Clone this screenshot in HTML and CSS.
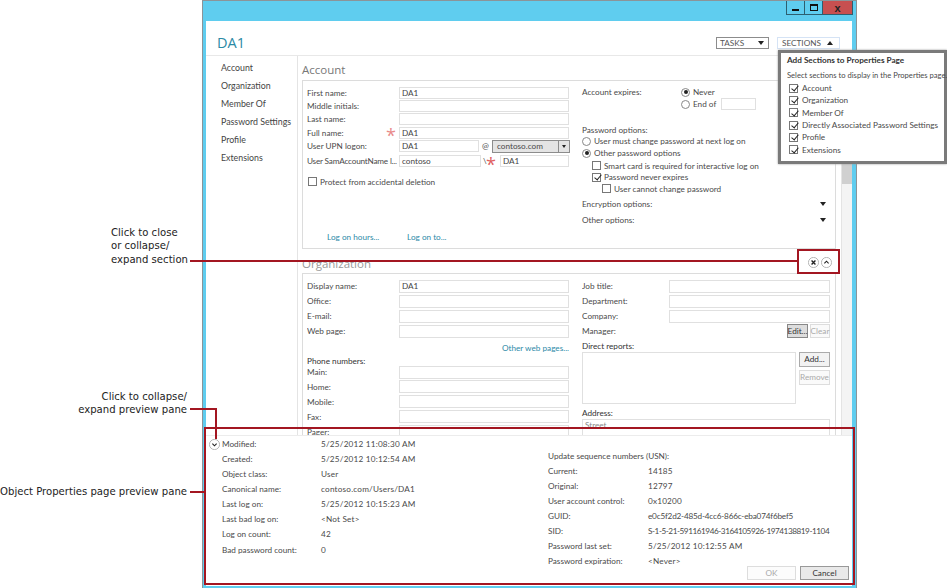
FILE: index.html
```html
<!DOCTYPE html>
<html lang="en">
<head>
  <meta charset="UTF-8" />
  <title>DA1 Properties</title>
  <link rel="stylesheet" href="styles.css">
</head>
<body>
  <div class="window">
    <div class="titlebar">
      <div class="winbtns">
        <span class="winbtn"><i class="min"></i></span>
        <span class="winbtn"><i class="max"></i></span>
        <span class="winbtn close">x</span>
      </div>
    </div>
    <div class="inner">
      <header class="top">
        <h1>DA1</h1>
        <div class="topbtn">TASKS <span class="tri-down"></span></div>
        <div class="topbtn sections">SECTIONS <span class="tri-up"></span></div>
      </header>
      <div class="content">
        <nav class="nav">
          <a>Account</a>
          <a>Organization</a>
          <a>Member Of</a>
          <a>Password Settings</a>
          <a>Profile</a>
          <a>Extensions</a>
        </nav>
        <main class="main">
          <h2>Account</h2>
          <section class="box account">
            <div class="col">
              <div class="row"><label>First name:</label><div class="input">DA1</div></div>
              <div class="row"><label>Middle initials:</label><div class="input"></div></div>
              <div class="row"><label>Last name:</label><div class="input"></div></div>
              <div class="row"><label>Full name:</label><span class="star">*</span><div class="input">DA1</div></div>
              <div class="row"><label>User UPN logon:</label><div class="input upn">DA1</div><span class="at">@</span><div class="combo">contoso.com<span class="combo-arrow"><b class="tri-down small"></b></span></div></div>
              <div class="row sam"><label>User SamAccountName l...</label><div class="input upn2">contoso</div><span class="slash">\</span><span class="star">*</span><div class="input grow">DA1</div></div>
              <div class="check protect"><span class="cb"></span>Protect from accidental deletion</div>
              <div class="links"><a>Log on hours...</a><a>Log on to...</a></div>
            </div>
            <div class="col right">
              <div class="expires">
                <label>Account expires:</label>
                <div class="expires-opts">
                  <div class="check"><span class="rb on"></span>Never</div>
                  <div class="check"><span class="rb"></span>End of<span class="input date"></span></div>
                </div>
              </div>
              <div class="pw-title">Password options:</div>
              <div class="check line"><span class="rb"></span>User must change password at next log on</div>
              <div class="check line"><span class="rb on"></span>Other password options</div>
              <div class="check line ind1 first-ind"><span class="cb"></span>Smart card is required for interactive log on</div>
              <div class="check line ind1"><span class="cb on"></span>Password never expires</div>
              <div class="check line ind2"><span class="cb"></span>User cannot change password</div>
              <div class="expander first">Encryption options:<span class="tri-down"></span></div>
              <div class="expander">Other options:<span class="tri-down"></span></div>
            </div>
          </section>
          <h2 class="org-title">Organization</h2>
          <section class="box org">
            <div class="col">
              <div class="row tall"><label>Display name:</label><div class="input">DA1</div></div>
              <div class="row tall"><label>Office:</label><div class="input"></div></div>
              <div class="row tall"><label>E-mail:</label><div class="input"></div></div>
              <div class="row tall"><label>Web page:</label><div class="input"></div></div>
              <a class="other-pages">Other web pages...</a>
              <div class="phones">Phone numbers:</div>
              <div class="row tall"><label>Main:</label><div class="input"></div></div>
              <div class="row tall"><label>Home:</label><div class="input"></div></div>
              <div class="row tall"><label>Mobile:</label><div class="input"></div></div>
              <div class="row tall"><label>Fax:</label><div class="input"></div></div>
              <div class="row tall"><label>Pager:</label><div class="input"></div></div>
            </div>
            <div class="col right">
              <div class="row tall r"><label>Job title:</label><div class="input"></div></div>
              <div class="row tall r"><label>Department:</label><div class="input"></div></div>
              <div class="row tall r"><label>Company:</label><div class="input"></div></div>
              <div class="row tall manager"><label>Manager:</label><span class="btn edit">Edit...</span><span class="btn off">Clear</span></div>
              <div class="direct-label">Direct reports:</div>
              <div class="direct">
                <div class="listbox"></div>
                <div class="direct-btns"><span class="btn">Add...</span><span class="btn off">Remove</span></div>
              </div>
              <div class="addr-label">Address:</div>
              <div class="input street">Street</div>
            </div>
          </section>
        </main>
        <div class="scrollbar"><span class="thumb"></span></div>
      </div>
      <footer class="preview">
        <div class="pcol">
          <div class="prow"><span class="pkey first"><svg class="round" viewBox="0 0 13 13"><circle cx="6.5" cy="6.5" r="6" fill="#fff" stroke="#aaa"/><path d="M4 5.5l2.5 2.5 2.5-2.5" fill="none" stroke="#222" stroke-width="1.3"/></svg>Modified:</span><span class="pval">5/25/2012 11:08:30 AM</span></div>
          <div class="prow"><span class="pkey">Created:</span><span class="pval">5/25/2012 10:12:54 AM</span></div>
          <div class="prow"><span class="pkey">Object class:</span><span class="pval">User</span></div>
          <div class="prow"><span class="pkey">Canonical name:</span><span class="pval">contoso.com/Users/DA1</span></div>
          <div class="prow"><span class="pkey">Last log on:</span><span class="pval">5/25/2012 10:15:23 AM</span></div>
          <div class="prow"><span class="pkey">Last bad log on:</span><span class="pval">&lt;Not Set&gt;</span></div>
          <div class="prow"><span class="pkey">Log on count:</span><span class="pval">42</span></div>
          <div class="prow"><span class="pkey">Bad password count:</span><span class="pval">0</span></div>
        </div>
        <div class="pcol second">
          <div class="usn">Update sequence numbers (USN):</div>
          <div class="prow"><span class="pkey">Current:</span><span class="pval">14185</span></div>
          <div class="prow"><span class="pkey">Original:</span><span class="pval">12797</span></div>
          <div class="prow"><span class="pkey">User account control:</span><span class="pval">0x10200</span></div>
          <div class="prow"><span class="pkey">GUID:</span><span class="guid">e0c5f2d2-485d-4cc6-866c-eba074f6bef5</span></div>
          <div class="prow"><span class="pkey">SID:</span><span class="sid">S-1-5-21-591161946-3164105926-1974138819-1104</span></div>
          <div class="prow"><span class="pkey">Password last set:</span><span class="pval">5/25/2012 10:12:55 AM</span></div>
          <div class="prow"><span class="pkey">Password expiration:</span><span class="pval">&lt;Never&gt;</span></div>
        </div>
        <div class="actions"><span class="btn wide off">OK</span><span class="btn wide">Cancel</span></div>
      </footer>
    </div>

    <!-- flyout over the window -->
    <div class="flyout">
      <h3>Add Sections to Properties Page</h3>
      <p>Select sections to display in the Properties page.</p>
      <div class="check"><span class="cb on"></span>Account</div>
      <div class="check"><span class="cb on"></span>Organization</div>
      <div class="check"><span class="cb on"></span>Member Of</div>
      <div class="check"><span class="cb on"></span>Directly Associated Password Settings</div>
      <div class="check"><span class="cb on"></span>Profile</div>
      <div class="check"><span class="cb on"></span>Extensions</div>
    </div>
    <div class="section-btns">
      <svg class="round" viewBox="0 0 13 13"><circle cx="6.5" cy="6.5" r="6" fill="#fff" stroke="#aaa"/><path d="M4.2 4.2l4.6 4.6M8.8 4.2l-4.6 4.6" stroke="#222" stroke-width="1.6"/></svg>
      <svg class="round" viewBox="0 0 13 13"><circle cx="6.5" cy="6.5" r="6" fill="#fff" stroke="#aaa"/><path d="M4 7.5l2.5-2.5 2.5 2.5" fill="none" stroke="#222" stroke-width="1.3"/></svg>
    </div>
  </div>

  <!-- callouts drawn over the screenshot -->
  <div class="note note1">Click to close<br>or collapse/<br>expand section</div>
  <div class="note note2">Click to collapse/<br>expand preview pane</div>
  <div class="note note3">Object Properties page preview pane</div>
  <div class="red line1"></div>
  <div class="red-box box1"></div>
  <div class="red line2"></div>
  <div class="red line2v"></div>
  <div class="red-box box2"></div>
  <div class="red line3"></div>
</body>
</html>
```

FILE: styles.css
```css
* {
  box-sizing: border-box;
}

body {
  margin: 0;
  width: 947px;
  height: 588px;
  position: relative;
  overflow: hidden;
  background: #fff;
  font-family: Lato, sans-serif;
  font-size: 8.2px;
  color: #4a4a4a;
}

.window {
  position: absolute;
  left: 202px;
  top: 0;
  width: 655px;
  height: 590px;
  background: #5fcdef;
  border: 1px solid #8b9499;
  display: flex;
  flex-direction: column;
}
.titlebar {
  height: 20px;
  flex: none;
  display: flex;
  justify-content: flex-end;
  padding-right: 3px;
}
.winbtns {
  display: flex;
  height: 14px;
  border: 1px solid #2d5f70;
  border-top: none;
}
.winbtn {
  width: 18px;
  border-right: 1px solid #2d5f70;
  display: flex;
  align-items: center;
  justify-content: center;
}
.winbtn .min {
  width: 7px;
  height: 2px;
  margin-top: 4px;
  background: #111;
}
.winbtn .max {
  width: 8px;
  height: 7px;
  border: 1px solid #111;
  border-top-width: 2px;
}
.winbtn.close {
  width: 29px;
  border-right: none;
  background: #c75050;
  color: #222;
  font: bold 11px "Liberation Sans", sans-serif;
}

.inner {
  flex: 1;
  min-height: 0;
  margin: 0 4px 3px 3px;
  background: #fff;
  display: flex;
  flex-direction: column;
}
.top {
  height: 35px;
  flex: none;
  display: flex;
  align-items: flex-start;
  padding: 16px 12px 0 11px;
  border-bottom: 1px solid #e8e8e8;
}
.top h1 {
  margin: -4px auto 0 0;
  font-family: "Open Sans", sans-serif;
  font-size: 14.5px;
  font-weight: 400;
  color: #2b8aa5;
}
.topbtn {
  width: 53px;
  height: 12px;
  margin-left: 8px;
  padding: 0 4px 0 3px;
  border: 1px solid #8c8c8c;
  display: flex;
  align-items: center;
  justify-content: space-between;
  font-size: 8.2px;
  color: #555;
  line-height: 10px;
}
.topbtn.sections {
  width: 63px;
  padding: 0 6px 0 4px;
  border-color: #d5e3f5;
}
.tri-down, .tri-up {
  display: inline-block;
  width: 0;
  height: 0;
  border-left: 3.5px solid transparent;
  border-right: 3.5px solid transparent;
}
.tri-down {
  border-top: 4px solid #222;
}
.tri-up {
  border-bottom: 4px solid #222;
}
.tri-down.small {
  border-left-width: 2.5px;
  border-right-width: 2.5px;
  border-top-width: 3px;
}

.content {
  flex: 1;
  min-height: 0;
  display: flex;
  overflow: hidden;
}
.nav {
  width: 92px;
  flex: none;
  padding: 6px 0 0 15px;
  border-right: 1px solid #e4e4e4;
}
.nav a {
  display: block;
  height: 18px;
  line-height: 12px;
  font-size: 8.8px;
  white-space: nowrap;
  color: #444;
}
.main {
  width: 544px;
  flex: none;
  padding: 0 5px 0 4px;
  border-right: 1px solid #e4e4e4;
}
.main h2 {
  margin: 0;
  height: 24px;
  padding-top: 6px;
  font-family: "Open Sans", sans-serif;
  font-size: 11.5px;
  line-height: 16px;
  font-weight: 400;
  color: #777;
}
.main h2.org-title {
  height: 24px;
  padding-top: 7px;
  color: #999;
}
.box {
  border: 1px solid #dcdcdc;
  display: flex;
  padding: 5px 5px 0 4px;
}
.account {
  height: 169px;
}
.org {
  height: 170px;
  padding-top: 5px;
  border-bottom: none;
}
.col {
  width: 262px;
  flex: none;
}
.col.right {
  width: 248px;
  margin-left: 13px;
}

.row {
  height: 13.4px;
  display: flex;
  align-items: center;
}
.row.tall {
  height: 14.9px;
}
.row label {
  width: 92px;
  flex: none;
  white-space: nowrap;
  overflow: hidden;
}
.row .star + .input {
  margin-left: 0;
}
.row.r label {
  width: 87px;
}
.input {
  flex: 1;
  height: 12px;
  min-width: 0;
  padding-left: 2px;
  border: 1px solid #e0e0e0;
  line-height: 10px;
  color: #444;
}
.row.tall .input {
  height: 13px;
  line-height: 11px;
}
.star {
  width: 0;
  color: #e88a8a;
  font-family: "Open Sans", sans-serif;
  font-size: 18px;
  line-height: 13px;
  position: relative;
  left: -13px;
  top: 3px;
}
.input.upn {
  flex: none;
  width: 80px;
}
.at {
  width: 13px;
  text-align: center;
}
.combo {
  flex: 1;
  height: 13px;
  padding-left: 4px;
  margin-right: -1px;
  border: 1px solid #8c8c8c;
  background: #e4e4e4;
  line-height: 11px;
  display: flex;
  justify-content: space-between;
}
.combo-arrow {
  width: 11px;
  border-left: 1px solid #8c8c8c;
  display: flex;
  align-items: center;
  justify-content: center;
}
.row.sam {
  height: 15px;
  margin-top: 1px;
}
.row.sam label {
  width: 91px;
  letter-spacing: -0.2px;
}
.input.upn2 {
  flex: none;
  width: 82px;
  margin-left: 1px;
}
.slash {
  width: 3px;
  margin-left: 2px;
}
.row.sam .star {
  position: static;
  width: 14px;
  margin-top: 6px;
  color: #e06060;
}
.row.sam .input.grow {
  flex: 1;
  margin-left: 0;
}

.check {
  display: flex;
  align-items: center;
  white-space: nowrap;
}
.cb {
  width: 9px;
  height: 9px;
  flex: none;
  margin-right: 3px;
  border: 1px solid #777;
  background: #fff;
  position: relative;
}
.cb.on::after {
  content: "";
  position: absolute;
  left: 2.5px;
  top: -0.5px;
  width: 3px;
  height: 6px;
  border: solid #222;
  border-width: 0 1.4px 1.4px 0;
  transform: rotate(40deg);
}
.rb {
  width: 9px;
  height: 9px;
  flex: none;
  margin-right: 3px;
  border: 1px solid #888;
  border-radius: 50%;
  background: #fff;
  position: relative;
}
.rb.on::after {
  content: "";
  position: absolute;
  left: 1.5px;
  top: 1.5px;
  width: 4px;
  height: 4px;
  border-radius: 50%;
  background: #222;
}
.protect {
  margin: 8px 0 0 1px;
}
.links {
  display: flex;
  margin: 45px 0 0 20px;
}
.links a, .other-pages {
  color: #2d8aa8;
}
.links a {
  width: 80px;
}

.expires {
  display: flex;
  height: 33px;
}
.expires label {
  width: 99px;
  padding-top: 1px;
}
.expires-opts .check {
  height: 12px;
}
.input.date {
  flex: none;
  display: block;
  width: 35px;
  height: 12px;
  margin: 0 0 0 5px;
}
.pw-title {
  margin-top: 5px;
  height: 11px;
  line-height: 12px;
}
.check.line {
  height: 12px;
}
.check.line.ind1, .check.line.ind2 {
  height: 11.5px;
}
.ind1 {
  margin-left: 10px;
}
.ind2 {
  margin-left: 20px;
}
.first-ind {
  margin-top: 1px;
}
.expander {
  height: 16px;
  line-height: 14px;
  display: flex;
  align-items: center;
  justify-content: space-between;
  padding-right: 4px;
}
.expander.first {
  margin-top: 1px;
}

.other-pages {
  display: block;
  height: 14px;
  line-height: 15px;
  margin-top: 2px;
  text-align: right;
}
.phones {
  height: 10px;
  line-height: 12px;
  margin-top: 0;
  color: #333;
}
.manager {
  justify-content: flex-start;
}
.manager label {
  flex: 1;
}
.btn {
  display: inline-flex;
  align-items: center;
  justify-content: center;
  height: 14px;
  border: 1px solid #aaa;
  background: #f2f2f2;
  color: #333;
}
.btn.off {
  border-color: #ddd;
  color: #aaa;
  background: #fafafa;
}
.btn.edit {
  width: 21px;
  margin-right: 2px;
  background: #ddd;
  border-color: #888;
}
.manager .off {
  width: 20px;
}
.direct-label {
  height: 9px;
  line-height: 13px;
  margin-top: 1px;
  color: #333;
}
.direct {
  display: flex;
  gap: 3px;
  margin-top: 3px;
}
.listbox {
  width: 214px;
  height: 52px;
  border: 1px solid #e0e0e0;
}
.direct-btns {
  flex: 1;
  display: flex;
  flex-direction: column;
  gap: 3px;
}
.direct-btns .btn {
  height: 15px;
}
.addr-label {
  height: 12px;
  line-height: 14px;
  margin-top: 2px;
  color: #333;
}
.input.street {
  height: 20px;
  color: #888;
  margin-top: 1px;
}

.scrollbar {
  width: 10px;
  background: #f4f4f4;
  padding-top: 104px;
}
.thumb {
  display: block;
  height: 24px;
  background: #d0d0d0;
}

.preview {
  height: 151px;
  flex: none;
  display: flex;
  position: relative;
  padding: 0 0 0 16px;
  border-top: 1px solid #ececec;
  background: #fff;
}
.pcol {
  width: 326px;
}
.pcol.second {
  width: 300px;
  padding-top: 14px;
}
.pcol.second .prow {
  height: 15px;
}
.usn {
  height: 13px;
  line-height: 13px;
}
.prow {
  display: flex;
  height: 15.15px;
  align-items: center;
  white-space: nowrap;
}
.pkey {
  width: 99px;
  flex: none;
  position: relative;
}
.pcol.second .pkey {
  width: 100px;
}
.pval {
  letter-spacing: 0.2px;
}
.guid {
  letter-spacing: -0.2px;
}
.sid {
  letter-spacing: -0.45px;
}
.pkey.first .round {
  position: absolute;
  left: -13px;
  top: 0;
}
.actions {
  position: absolute;
  right: 3px;
  bottom: 6px;
  display: flex;
  gap: 4px;
}
.btn.wide {
  width: 49px;
  height: 14px;
  background: #e9e9e9;
  border-color: #999;
}
.btn.wide.off {
  background: #fcfcfc;
  border-color: #ddd;
}

.round {
  width: 11px;
  height: 11px;
  display: block;
}

.flyout {
  position: absolute;
  left: 575px;
  top: 49px;
  width: 169px;
  height: 114px;
  padding: 1px 6px 1px 6px;
  border: 3px solid #7a7a7a;
  background: #fff;
  box-shadow: 0 0 2px #999;
}
.flyout h3 {
  margin: 0;
  font-size: 8.2px;
  line-height: 12px;
  font-weight: 700;
  color: #333;
}
.flyout p {
  margin: 3px 0 1px;
  line-height: 12px;
  font-size: 7.6px;
  white-space: nowrap;
}
.flyout .check {
  height: 12.3px;
  margin-left: 2px;
}
.flyout .cb {
  margin-right: 4px;
}
.section-btns {
  position: absolute;
  left: 605px;
  top: 256px;
  display: flex;
  gap: 2px;
}

.note {
  position: absolute;
  right: 760px;
  font-family: "DejaVu Sans", sans-serif;
  font-size: 10.1px;
  line-height: 13.3px;
  color: #222;
  white-space: nowrap;
  text-align: right;
}
.note1 {
  right: auto;
  left: 111px;
  top: 226px;
  text-align: left;
}
.note2 {
  top: 390px;
}
.note3 {
  top: 485px;
}
.red {
  position: absolute;
  background: #a31621;
}
.red-box {
  position: absolute;
  border: 2px solid #a31621;
}
.line1 {
  left: 190px;
  top: 260px;
  width: 608px;
  height: 2px;
}
.box1 {
  left: 797px;
  top: 249px;
  width: 43px;
  height: 25px;
}
.line2 {
  left: 190px;
  top: 408px;
  width: 27px;
  height: 2px;
}
.line2v {
  left: 215px;
  top: 408px;
  width: 2px;
  height: 31px;
}
.box2 {
  left: 204px;
  top: 427px;
  width: 651px;
  height: 158px;
}
.line3 {
  left: 190px;
  top: 491px;
  width: 15px;
  height: 2px;
}
```
